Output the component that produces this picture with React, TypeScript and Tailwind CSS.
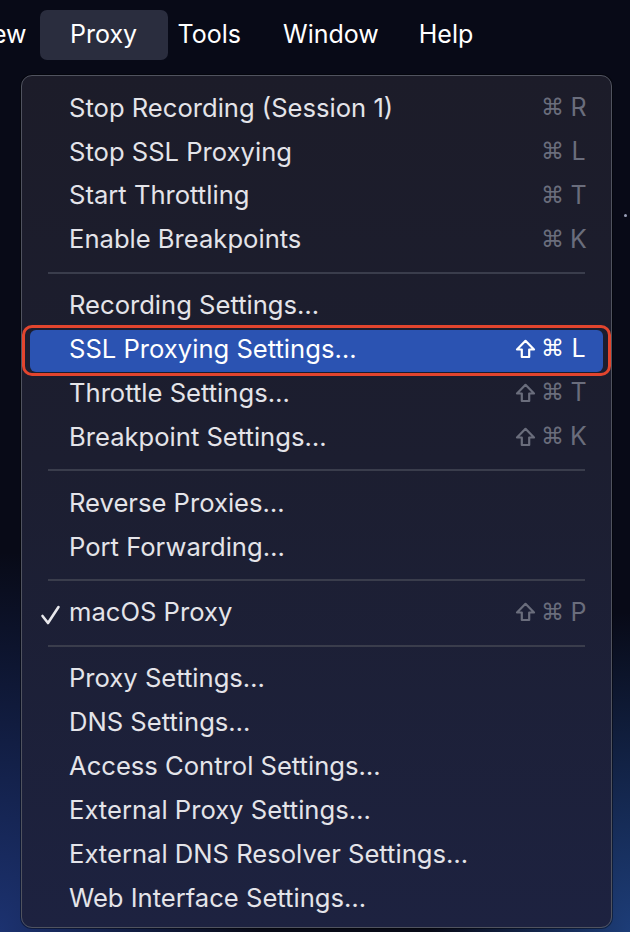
import React from "react";

type Item =
  | { kind: "item"; label: string; keys: string[]; checked?: boolean; active?: boolean }
  | { kind: "sep" };

const items: Item[] = [
  { kind: "item", label: "Stop Recording (Session 1)", keys: ["⌘", "R"] },
  { kind: "item", label: "Stop SSL Proxying", keys: ["⌘", "L"] },
  { kind: "item", label: "Start Throttling", keys: ["⌘", "T"] },
  { kind: "item", label: "Enable Breakpoints", keys: ["⌘", "K"] },
  { kind: "sep" },
  { kind: "item", label: "Recording Settings…", keys: [] },
  { kind: "item", label: "SSL Proxying Settings…", keys: ["⇧", "⌘", "L"], active: true },
  { kind: "item", label: "Throttle Settings…", keys: ["⇧", "⌘", "T"] },
  { kind: "item", label: "Breakpoint Settings…", keys: ["⇧", "⌘", "K"] },
  { kind: "sep" },
  { kind: "item", label: "Reverse Proxies…", keys: [] },
  { kind: "item", label: "Port Forwarding…", keys: [] },
  { kind: "sep" },
  { kind: "item", label: "macOS Proxy", keys: ["⇧", "⌘", "P"], checked: true },
  { kind: "sep" },
  { kind: "item", label: "Proxy Settings…", keys: [] },
  { kind: "item", label: "DNS Settings…", keys: [] },
  { kind: "item", label: "Access Control Settings…", keys: [] },
  { kind: "item", label: "External Proxy Settings…", keys: [] },
  { kind: "item", label: "External DNS Resolver Settings…", keys: [] },
  { kind: "item", label: "Web Interface Settings…", keys: [] },
];

const font = { fontFamily: "Inter, 'Noto Sans', 'DejaVu Sans', sans-serif" };

function ShiftIcon() {
  return (
    <svg width="21" height="20" viewBox="0 0 21 20" fill="none" stroke="currentColor" strokeWidth="2.2" strokeLinejoin="round">
      <path d="M10.5 1.8 L19 10.5 L14.2 10.5 L14.2 18 L6.8 18 L6.8 10.5 L2 10.5 Z" />
    </svg>
  );
}

function Keys({ keys, active }: { keys: string[]; active?: boolean }) {
  return (
    <div className={`flex items-center gap-[5px] ${active ? "text-white" : "text-[#6a6d7c]"}`}>
      {keys.map((k, i) =>
        k === "⇧" ? (
          <ShiftIcon key={i} />
        ) : k === "⌘" ? (
          <span key={i} className="text-[23px] leading-none" style={{ fontFamily: "'DejaVu Sans', sans-serif" }}>
            {k}
          </span>
        ) : (
          <span key={i} className="text-[25px] leading-none w-[19px] text-center">
            {k}
          </span>
        )
      )}
    </div>
  );
}

export default function App() {
  return (
    <div
      className="w-[630px] h-[932px] overflow-hidden relative"
      style={{
        ...font,
        background:
          "radial-gradient(ellipse 260px 380px at 0% 100%, #1c3270 0%, rgba(16,24,60,0) 100%), radial-gradient(ellipse 200px 320px at 100% 100%, #1d3d78 0%, rgba(16,24,60,0) 100%), #080a17",
      }}
    >
      {/* menubar */}
      <div className="flex items-center h-[70px] text-[25px] text-white">
        <span className="ml-[-8px]">ew</span>
        <div className="ml-[13px] h-[50px] w-[128px] flex items-center justify-center rounded-[7px] bg-[#2a2d3e]">
          Proxy
        </div>
        <span className="ml-[10px]">Tools</span>
        <span className="ml-[42px]">Window</span>
        <span className="ml-[40px]">Help</span>
      </div>

      <div className="absolute right-[3px] top-[214px] w-[3px] h-[3px] rounded-full bg-[#9aa0b8]" />

      {/* menu panel */}
      <div
        className="absolute left-[21px] top-[75px] w-[591px] h-[853px] rounded-[11px] border border-[#50535f] pt-[10px] pb-[7px] flex flex-col"
        style={{
          background: "linear-gradient(180deg, #1c1c29 0%, #1c1e30 45%, #1d2240 100%)",
          boxShadow: "0 0 0 1px rgba(0,0,0,0.4)",
        }}
      >
        {items.map((it, i) =>
          it.kind === "sep" ? (
            <div key={i} className="h-[22px] flex items-center px-[26px]">
              <div className="h-[2px] w-full bg-[#3a3d4c]" />
            </div>
          ) : (
            <div key={i} className="relative h-[44px]">
              {it.active && (
                <div className="absolute left-[0px] right-[0px] top-[-2px] bottom-[-5px] rounded-[10px] border-[3px] border-[#e2452e]" />
              )}
              <div
                className={`absolute left-[8px] right-[8px] top-[3px] bottom-[-1px] rounded-[6px] flex items-center ${
                  it.active ? "bg-[#2b53b2]" : ""
                }`}
              >
                <div className="w-[10px] flex-none" />
                <div className="w-[29px] flex-none text-[#e8e8ec] flex items-center">
                  {it.checked ? (
                    <svg width="21" height="20" viewBox="0 0 21 20" fill="none" stroke="currentColor" strokeWidth="2.6" strokeLinecap="round" strokeLinejoin="round">
                      <path d="M2.5 11 L8 18 L18.5 2" />
                    </svg>
                  ) : null}
                </div>
                <div className={`flex-1 text-[25.6px] leading-none mt-[-5px] ${it.active ? "text-white" : "text-[#e4e4e9]"}`}>
                  {it.label}
                </div>
                <div className="pr-[15px] mt-[-5px]">
                  <Keys keys={it.keys} active={it.active} />
                </div>
              </div>
            </div>
          )
        )}
      </div>
    </div>
  );
}
